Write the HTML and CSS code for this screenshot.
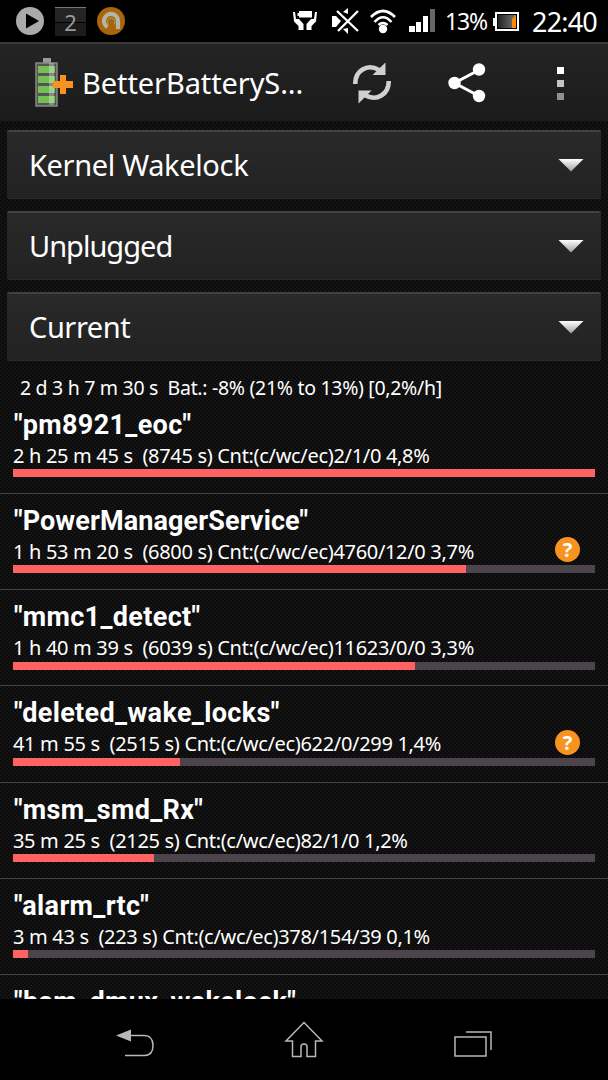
FILE: index.html
```html
<!DOCTYPE html>
<html lang="en">
<head>
<meta charset="utf-8">
<title>BetterBatteryStats</title>
<link rel="stylesheet" href="styles.css">
</head>
<body>
<div class="phone">
  <header class="status">
    <div class="notifications">
      <svg width="28" height="28" viewBox="0 0 28 28"><circle cx="14" cy="14" r="14" fill="#aaa"/><path d="M10 6.500v15L23 14z" fill="#000"/></svg>
      <span class="count">2</span>
      <svg width="28" height="28" viewBox="0 0 28 28"><circle cx="14" cy="14" r="14" fill="#a8650a"/><path d="M10.500 20A7 7 0 1 1 21 14.500V22" fill="none" stroke="#b4b4a8" stroke-width="4.200"/><path d="M11.500 17.500a3.800 3.800 0 1 1 5.500 0" fill="none" stroke="#8fae6a" stroke-width="1"/></svg>
    </div>
    <div class="indicators">
      <svg class="i-care" width="24" height="22" viewBox="0 0 24 22"><path d="M6 1h13v6.500H6zM4.500 3h2v3h-2z" fill="#fff"/><path d="M0 2h2l1 7 3 0 4.500 5v6H5.500V16L1 11.500zM24 2h-2l-1 7-3 0-4.500 5v6H18.500V16l4.500-4.500z" fill="#fff"/></svg>
      <svg class="i-mute" width="28" height="26" viewBox="0 0 28 26"><path d="M1 8h4l5 5-5 6H1zM12 4l5-4v6zM12 21l5 5v-6z" fill="#fff"/><path d="M6 3l21 20M27 3L7 23" stroke="#fff" stroke-width="2.300"/></svg>
      <svg class="i-wifi" width="28" height="26" viewBox="0 0 28 26"><path d="M2 9Q14-3 26 9M5.500 14Q14 4.500 22.500 14M9.500 17q4.500-4 9 0" fill="none" stroke="#fff" stroke-width="2.600"/><circle cx="14" cy="21" r="4.200" fill="#fff"/></svg>
      <svg class="i-signal" width="27" height="24" viewBox="0 0 27 24"><path d="M0 17h6v6H0zM7 13h5v10H7zM14 7h5v16h-5z" fill="#fff"/><path d="M21 0h5v23h-5z" fill="#666"/></svg>
      <span class="pct">13%</span>
      <svg class="i-batt" width="26" height="20" viewBox="0 0 26 20"><defs><linearGradient id="cell"><stop offset="0" stop-color="#222"/><stop offset="1" stop-color="#777"/></linearGradient></defs><path d="M3 1h22v17H3z" fill="#000" stroke="#fff" stroke-width="2"/><path d="M0 6h2v8H0z" fill="#fff"/><path d="M5 3h18v13H5z" fill="url(#cell)"/><path d="M19 7l4-4v13h-4z" fill="#f80"/></svg>
      <span class="clock">22:40</span>
    </div>
  </header>

  <div class="actionbar">
    <svg class="logo" width="38" height="50" viewBox="0 0 38 50"><path d="M8 0h8v5H8z" fill="#999"/><path d="M1 5h21v43H1z" fill="#555" stroke="#888" stroke-width="1.500"/><path d="M3 8h17v7H3zM3 18h17v7H3zM3 28h17v7H3zM3 38h17v7H3z" fill="#76be56"/><path d="M14 5h5v42h-5z" fill="#fff" opacity=".3"/><path d="M25 17h6v6h7v7h-7v6h-6v-6h-7v-7h7z" fill="#f7931e"/></svg>
    <h1 class="title">BetterBatteryS...</h1>
    <svg class="refresh" width="38" height="42" viewBox="0 0 38 42"><path d="M2.300 22C2 9 14 1 26 8M35.700 19c.3 13-12 21-24 14" fill="none" stroke="#d0d0d0" stroke-width="4.600"/><path d="M32.500.5V13H19.500zM5.500 41.500V28.500h13z" fill="#d0d0d0"/></svg>
    <svg class="share" width="38" height="40" viewBox="0 0 38 40"><path d="M31 7L6.500 20 31 33" fill="none" stroke="#fff" stroke-width="3"/><circle cx="31" cy="6.500" r="6.200" fill="#fff"/><circle cx="6.500" cy="20" r="6.200" fill="#fff"/><circle cx="31" cy="33" r="6.200" fill="#fff"/></svg>
    <svg class="more" width="8" height="34" viewBox="0 0 8 34"><path d="M0 0h7v7H0z" fill="#fff"/><path d="M0 13h7v7H0z" fill="#c4c4c4"/><path d="M0 26h7v7H0z" fill="#8f8f8f"/></svg>
  </div>

  <main class="content">
    <div class="spinners">
      <div class="spinner"><span class="kernel">Kernel Wakelock</span><i class="arrow"></i></div>
      <div class="spinner"><span class="unplugged">Unplugged</span><i class="arrow"></i></div>
      <div class="spinner"><span class="current">Current</span><i class="arrow"></i></div>
    </div>
    <p class="summary">2 d 3 h 7 m 30 s  Bat.: -8% (21% to 13%) [0,2%/h]</p>
    <ul class="list">
      <li class="row"><h2>"pm8921_eoc"</h2><p>2 h 25 m 45 s  (8745 s) Cnt:(c/wc/ec)2/1/0 4,8%</p><div class="bar"><div class="fill" style="width:100%"></div></div></li>
      <li class="row"><h2 class="tight">"PowerManagerService"</h2><p>1 h 53 m 20 s  (6800 s) Cnt:(c/wc/ec)4760/12/0 3,7%</p><div class="bar"><div class="fill" style="width:77.8%"></div></div><b class="help">?</b></li>
      <li class="row"><h2>"mmc1_detect"</h2><p>1 h 40 m 39 s  (6039 s) Cnt:(c/wc/ec)11623/0/0 3,3%</p><div class="bar"><div class="fill" style="width:69.1%"></div></div></li>
      <li class="row"><h2>"deleted_wake_locks"</h2><p>41 m 55 s  (2515 s) Cnt:(c/wc/ec)622/0/299 1,4%</p><div class="bar"><div class="fill" style="width:28.7%"></div></div><b class="help">?</b></li>
      <li class="row"><h2>"msm_smd_Rx"</h2><p>35 m 25 s  (2125 s) Cnt:(c/wc/ec)82/1/0 1,2%</p><div class="bar"><div class="fill" style="width:24.3%"></div></div></li>
      <li class="row"><h2>"alarm_rtc"</h2><p>3 m 43 s  (223 s) Cnt:(c/wc/ec)378/154/39 0,1%</p><div class="bar"><div class="fill" style="width:2.5%"></div></div></li>
      <li class="row"><h2>"bam_dmux_wakelock"</h2></li>
    </ul>
  </main>

  <nav class="navbar">
    <svg width="38" height="28" viewBox="0 0 38 28"><path d="M15 6.500h13q9 0 9 10t-9 10H9" fill="none" stroke="#b8b8b8" stroke-width="1.500"/><path d="M0 6.500L15 .5v12z" fill="#b8b8b8"/></svg>
    <svg class="home" width="40" height="38" viewBox="0 0 40 38"><path d="M20 1.500L2 20h6.500v15.500H17V26q0-3 3-3t3 3v9.500h8.500V20H38z" fill="none" stroke="#b8b8b8" stroke-width="1.500"/></svg>
    <svg class="recents" width="38" height="26" viewBox="0 0 38 26"><path d="M1 6h31v19H1zM12 1h25v18" fill="none" stroke="#b8b8b8" stroke-width="1.500"/></svg>
  </nav>
</div>
</body>
</html>
```
FILE: styles.css
```css
* { box-sizing: border-box; margin: 0; padding: 0; }
body { background: #000; color: #fff; font-family: "Noto Sans", sans-serif; }
.phone { width: 608px; height: 1080px; display: flex; flex-direction: column; overflow: hidden; }
svg { display: block; flex: none; }

.status { height: 42px; flex: none; display: flex; justify-content: space-between; padding: 0 11px 0 16px; }
.notifications { display: flex; align-items: center; gap: 11px; }
.count { width: 31px; height: 29px; border-top: 1px solid #777; background: linear-gradient(#242424 50%, #000 50%, #000 55%, #1c1c1c 55%); color: #999; font-size: 22px; line-height: 28px; text-align: center; }
.indicators { display: flex; align-items: center; }
.i-mute { margin-left: 14px; }
.i-wifi { margin-left: 10px; }
.i-signal { margin-left: 12px; }
.pct { width: 40px; margin-left: 9px; font-size: 23px; letter-spacing: -1.2px; white-space: nowrap; }
.i-batt { margin: 2px 0 0 8px; }
.clock { width: 65px; margin-left: 13px; font-size: 27px; letter-spacing: -.8px; white-space: nowrap; }

.actionbar { height: 80px; flex: none; display: flex; align-items: center; padding: 1px 0 0 35px; border-top: 2px solid #393939; border-bottom: 1px solid #111; background: linear-gradient(#242424, #1b1b1b); }
.title { width: 224px; margin: -2px 0 0 9px; font-size: 29px; font-weight: 400; letter-spacing: -.1px; white-space: nowrap; }
.refresh { margin-left: 47px; }
.share { margin-left: 57px; }
.more { margin: 2px 0 0 71px; }

.content { flex: 1; min-height: 0; overflow: hidden; background: repeating-conic-gradient(#0b0b0b 0 25%, #141414 0 50%) 0 0 / 4px 4px; }
.spinners { display: flex; flex-direction: column; gap: 12px; padding: 8px 7px 0; }
.spinner { height: 69px; display: flex; align-items: center; justify-content: space-between; padding: 0 17px 0 22px; border-top: 2px solid #453f41; border-bottom: 1px solid #2b2b2b; border-radius: 2px; background: linear-gradient(#292929, #222); font-size: 29px; }
.spinner span { margin-top: -2px; }
.kernel { letter-spacing: -.35px; }
.unplugged { letter-spacing: -1px; }
.current { letter-spacing: -.45px; }
.arrow { width: 26px; height: 13px; background: linear-gradient(#fff, #999); clip-path: polygon(0 0, 100% 0, 50% 100%); }
.summary { height: 36.600px; padding: 13px 0 0 20px; font-size: 19.500px; line-height: 28px; letter-spacing: -.3px; white-space: pre; }
.list { list-style: none; }
.row { position: relative; height: 96.250px; padding: 11px 13px 0; border-bottom: 1px solid #444; }
.row h2 { padding-left: 1px; font: bold 27px/32px Roboto, sans-serif; letter-spacing: .35px; white-space: nowrap; }
.row .tight { letter-spacing: .1px; }
.row p { height: 28.500px; font-size: 20px; line-height: 29px; letter-spacing: -.32px; white-space: pre; }
.bar { height: 8px; background: #4b444a; }
.fill { height: 100%; background: #ff6262; }
.help { position: absolute; right: 28px; top: 43.500px; width: 25px; height: 25px; border-radius: 50%; background: #f7931e; font: bold 20px/25px "Noto Sans", sans-serif; text-align: center; }

.navbar { height: 81px; flex: none; display: flex; align-items: center; justify-content: space-between; padding: 6px 116px 0; background: #000; }
.home { margin-bottom: 6px; }
.recents { margin-top: 2px; }
```
